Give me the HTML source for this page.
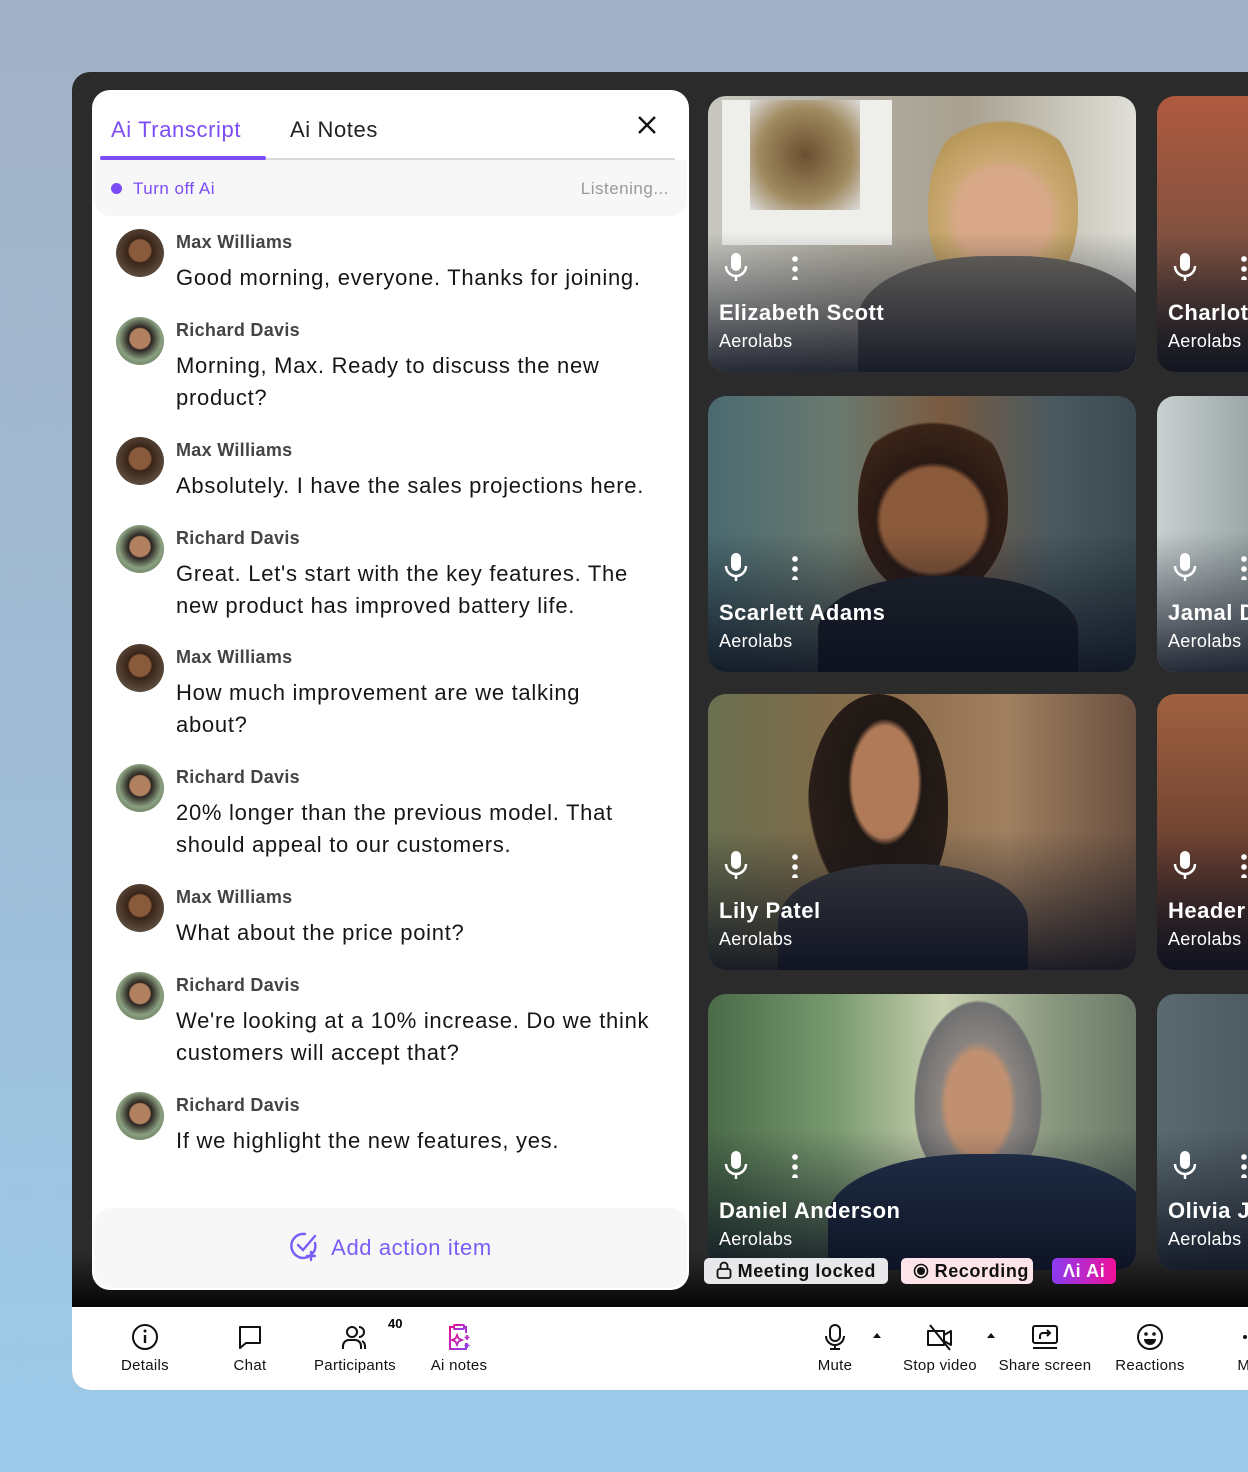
<!DOCTYPE html>
<html><head><meta charset="utf-8">
<style>
*{margin:0;padding:0;box-sizing:border-box}
body{width:1248px;height:1472px;overflow:hidden;font-family:"Liberation Sans",sans-serif;background:linear-gradient(180deg,#a2b1c5 0%,#a0bcd6 50%,#9ccbea 100%);position:relative}
.frame{position:absolute;left:72px;top:72px;width:1200px;height:1318px;background:#2b2b2b;border-radius:18px 0 0 18px;overflow:hidden}
.frame:after{content:"";position:absolute;left:0;right:0;top:1180px;height:56px;background:linear-gradient(#2b2b2b,#050505)}
.panel{position:absolute;left:92px;top:90px;width:597px;height:1200px;background:#fff;border-radius:18px;z-index:2;overflow:hidden}
.tab{position:absolute;top:27px;font-size:22px;letter-spacing:.6px}
.tabline{position:absolute;left:8px;right:14px;top:68px;height:2px;background:#d8d8dc}
.tabact{position:absolute;left:8px;width:166px;top:66px;height:4px;background:#7b4cf5;border-radius:2px}
.status{position:absolute;left:2px;right:2px;top:70px;height:56px;background:#f7f7f8;border-radius:0 0 16px 16px}
.ent{position:absolute;left:24px;width:560px}
.av{position:absolute;left:0;top:-13px;width:48px;height:48px;border-radius:50%}
.av.m{background:radial-gradient(circle at 50% 45%,#8a5a3c 0 30%,#3a2418 34%,#5a4a3c 70%,#2a2a30)}
.av.r{background:radial-gradient(circle at 50% 45%,#b08060 0 28%,#2a2220 32%,#8aa080 60%,#506048)}
.nm{position:absolute;left:60px;top:-10px;font-size:18px;font-weight:bold;color:#444;letter-spacing:.3px}
.tx{position:absolute;left:60px;top:20px;font-size:22px;line-height:32px;color:#161616;width:478px;letter-spacing:.72px}
.add{position:absolute;left:2px;right:2px;top:1118px;height:80px;background:#f7f7f8;border-radius:18px;text-align:center;color:#7b5cf5;font-size:22px;line-height:80px;letter-spacing:.6px}
.tile{position:absolute;width:428px;height:276px;border-radius:18px;overflow:hidden;z-index:1}
.tile .sh{position:absolute;left:0;right:0;bottom:0;height:140px;background:linear-gradient(transparent,rgba(10,15,30,.85))}
.tile .n{position:absolute;left:11px;bottom:46px;color:#fff;font-weight:bold;font-size:22px;white-space:nowrap;letter-spacing:.5px}
.tile .c{position:absolute;left:11px;bottom:20px;color:#fff;font-size:18px;letter-spacing:.3px}
.tile svg{position:absolute;left:16px;bottom:90px}
.tile .dots{position:absolute;left:84px;bottom:92px;width:6px;height:26px;background:radial-gradient(circle,#fff 2.6px,transparent 3px) 0 0/6px 10px repeat-y}
.face{position:absolute;border-radius:50% 50% 45% 45%}
.body{position:absolute;border-radius:45% 45% 0 0}
.tb{position:absolute;top:1307px;left:72px;width:1200px;height:83px;background:#fff;border-radius:0 0 0 18px;z-index:3}
.ti{position:absolute;top:16px;text-align:center;font-size:15px;color:#111;width:110px;letter-spacing:.3px}
.ti svg{display:block;margin:0 auto 6px}
.badge{position:absolute;top:1258px;height:26px;border-radius:5px;font-size:18px;font-weight:bold;line-height:26px;z-index:4;letter-spacing:.6px}
</style></head><body>
<div class="frame"></div>

<div class="tile" style="left:708px;top:96px;background:linear-gradient(90deg,#c8c8c0 0%,#b4b0a4 30%,#a8a090 60%,#e0e0d8 100%)">
 <div style="position:absolute;left:14px;top:4px;width:170px;height:145px;background:#eeeeea"></div>
 <div style="position:absolute;left:42px;top:4px;width:110px;height:110px;background:radial-gradient(circle,#6a5030,#a08a60 60%,#ddd)"></div>
 <div class="face" style="left:220px;top:10px;width:150px;height:200px;background:radial-gradient(circle at 50% 55%,#d8a888 0 35%,#c8a870 45%,#b89858 70%,transparent 72%)"></div>
 <div class="body" style="left:150px;top:160px;width:290px;height:140px;background:#6a6660"></div>
 <div class="sh"></div>
 <svg width="24" height="30" viewBox="0 0 24 30"><rect x="7" y="1" width="10" height="18" rx="5" fill="#fff"/><path d="M2 14a10 10 0 0 0 20 0M12 24v5" stroke="#fff" stroke-width="2.5" fill="none"/></svg><div class="dots"></div>
 <div class="n">Elizabeth Scott</div><div class="c">Aerolabs</div></div>
<div class="tile" style="left:1157px;top:96px;background:linear-gradient(180deg,#b05a40,#7a5040 60%,#403830)">
 <div class="sh"></div><svg width="24" height="30" viewBox="0 0 24 30"><rect x="7" y="1" width="10" height="18" rx="5" fill="#fff"/><path d="M2 14a10 10 0 0 0 20 0M12 24v5" stroke="#fff" stroke-width="2.5" fill="none"/></svg><div class="dots"></div>
 <div class="n">Charlotte</div><div class="c">Aerolabs</div></div>

<div class="tile" style="left:708px;top:396px;background:linear-gradient(90deg,#4a6a70 0%,#6a7a70 30%,#7a5a40 55%,#4a5a60 80%,#3a4a50 100%)">
 <div class="face" style="left:150px;top:10px;width:150px;height:190px;background:radial-gradient(circle at 50% 60%,#8a5a3a 0 38%,#2a1a14 42%,#3a2418 70%,transparent 72%)"></div>
 <div class="body" style="left:110px;top:180px;width:260px;height:120px;background:#20242c"></div>
 <div class="sh"></div><svg width="24" height="30" viewBox="0 0 24 30"><rect x="7" y="1" width="10" height="18" rx="5" fill="#fff"/><path d="M2 14a10 10 0 0 0 20 0M12 24v5" stroke="#fff" stroke-width="2.5" fill="none"/></svg><div class="dots"></div>
 <div class="n">Scarlett Adams</div><div class="c">Aerolabs</div></div>
<div class="tile" style="left:1157px;top:396px;background:linear-gradient(90deg,#c8d0d0,#607070 50%,#405050)">
 <div class="sh"></div><svg width="24" height="30" viewBox="0 0 24 30"><rect x="7" y="1" width="10" height="18" rx="5" fill="#fff"/><path d="M2 14a10 10 0 0 0 20 0M12 24v5" stroke="#fff" stroke-width="2.5" fill="none"/></svg><div class="dots"></div>
 <div class="n">Jamal D</div><div class="c">Aerolabs</div></div>

<div class="tile" style="left:708px;top:694px;background:linear-gradient(90deg,#6a7050 0%,#8a6a48 40%,#a08060 70%,#6a5040 100%)">
 <div class="face" style="left:100px;top:0px;width:140px;height:220px;background:radial-gradient(ellipse at 55% 40%,#b07a58 0 30%,#201814 34%,#2a1e18 70%,transparent 72%)"></div>
 <div class="body" style="left:70px;top:170px;width:250px;height:130px;background:#3a3a40"></div>
 <div class="sh"></div><svg width="24" height="30" viewBox="0 0 24 30"><rect x="7" y="1" width="10" height="18" rx="5" fill="#fff"/><path d="M2 14a10 10 0 0 0 20 0M12 24v5" stroke="#fff" stroke-width="2.5" fill="none"/></svg><div class="dots"></div>
 <div class="n">Lily Patel</div><div class="c">Aerolabs</div></div>
<div class="tile" style="left:1157px;top:694px;background:linear-gradient(180deg,#a06040,#6a4030 60%,#3a2a28)">
 <div class="sh"></div><svg width="24" height="30" viewBox="0 0 24 30"><rect x="7" y="1" width="10" height="18" rx="5" fill="#fff"/><path d="M2 14a10 10 0 0 0 20 0M12 24v5" stroke="#fff" stroke-width="2.5" fill="none"/></svg><div class="dots"></div>
 <div class="n">Header</div><div class="c">Aerolabs</div></div>

<div class="tile" style="left:708px;top:994px;background:linear-gradient(90deg,#4a6a48 0%,#7a9a70 30%,#c8d0b0 55%,#8a9880 80%,#6a7a68 100%)">
 <div class="face" style="left:205px;top:5px;width:130px;height:190px;background:radial-gradient(ellipse at 50% 55%,#c09070 0 35%,#8a8480 42%,#707070 68%,transparent 70%)"></div>
 <div class="body" style="left:120px;top:160px;width:320px;height:140px;background:#22304a"></div>
 <div class="sh"></div><svg width="24" height="30" viewBox="0 0 24 30"><rect x="7" y="1" width="10" height="18" rx="5" fill="#fff"/><path d="M2 14a10 10 0 0 0 20 0M12 24v5" stroke="#fff" stroke-width="2.5" fill="none"/></svg><div class="dots"></div>
 <div class="n">Daniel Anderson</div><div class="c">Aerolabs</div></div>
<div class="tile" style="left:1157px;top:994px;background:linear-gradient(90deg,#5a6a70,#3a4048 60%,#2a3038)">
 <div class="sh"></div><svg width="24" height="30" viewBox="0 0 24 30"><rect x="7" y="1" width="10" height="18" rx="5" fill="#fff"/><path d="M2 14a10 10 0 0 0 20 0M12 24v5" stroke="#fff" stroke-width="2.5" fill="none"/></svg><div class="dots"></div>
 <div class="n">Olivia J</div><div class="c">Aerolabs</div></div>

<div class="badge" style="left:704px;width:184px;background:#e8e8ea;color:#111;padding-left:12px">
 <svg width="16" height="18" viewBox="0 0 16 18" style="vertical-align:-2px"><rect x="1.5" y="8" width="13" height="9" rx="2" fill="none" stroke="#111" stroke-width="1.8"/><path d="M4.5 8V5a3.5 3.5 0 0 1 7 0v3" fill="none" stroke="#111" stroke-width="1.8"/></svg> Meeting locked</div>
<div class="badge" style="left:901px;width:132px;background:#fde4e8;color:#111;padding-left:12px">
 <svg width="16" height="16" viewBox="0 0 16 16" style="vertical-align:-2px"><circle cx="8" cy="8" r="6.5" fill="none" stroke="#111" stroke-width="1.6"/><circle cx="8" cy="8" r="4" fill="#111"/></svg> Recording</div>
<div class="badge" style="left:1052px;width:64px;background:linear-gradient(90deg,#8a3cf0,#f0109a);color:#fff;padding-left:11px">&#923;i Ai</div>

<div class="panel">
 <div class="status">
  <div style="position:absolute;left:17px;top:23px;width:11px;height:11px;border-radius:50%;background:#7b4cf5"></div>
  <div style="position:absolute;left:39px;top:19px;font-size:17px;color:#7b4cf5;letter-spacing:.5px">Turn off Ai</div>
  <div style="position:absolute;right:18px;top:19px;font-size:17px;color:#999;letter-spacing:.5px">Listening...</div>
 </div>
 <div class="tabline"></div><div class="tabact"></div>
 <div class="tab" style="left:19px;color:#7b4cf5">Ai Transcript</div>
 <div class="tab" style="left:198px;color:#222">Ai Notes</div>
 <svg style="position:absolute;left:545px;top:25px" width="20" height="20" viewBox="0 0 20 20"><path d="M2 2L18 18M18 2L2 18" stroke="#111" stroke-width="2.4"/></svg>
 <div class="ent" style="top:152px"><div class="av m"></div><div class="nm">Max Williams</div><div class="tx">Good morning, everyone. Thanks for joining.</div></div>
 <div class="ent" style="top:240px"><div class="av r"></div><div class="nm">Richard Davis</div><div class="tx">Morning, Max. Ready to discuss the new product?</div></div>
 <div class="ent" style="top:360px"><div class="av m"></div><div class="nm">Max Williams</div><div class="tx">Absolutely. I have the sales projections here.</div></div>
 <div class="ent" style="top:448px"><div class="av r"></div><div class="nm">Richard Davis</div><div class="tx">Great. Let's start with the key features. The new product has improved battery life.</div></div>
 <div class="ent" style="top:567px"><div class="av m"></div><div class="nm">Max Williams</div><div class="tx">How much improvement are we talking about?</div></div>
 <div class="ent" style="top:687px"><div class="av r"></div><div class="nm">Richard Davis</div><div class="tx">20% longer than the previous model. That should appeal to our customers.</div></div>
 <div class="ent" style="top:807px"><div class="av m"></div><div class="nm">Max Williams</div><div class="tx">What about the price point?</div></div>
 <div class="ent" style="top:895px"><div class="av r"></div><div class="nm">Richard Davis</div><div class="tx">We're looking at a 10% increase. Do we think customers will accept that?</div></div>
 <div class="ent" style="top:1015px"><div class="av r"></div><div class="nm">Richard Davis</div><div class="tx">If we highlight the new features, yes.</div></div>
 <div class="add"><svg width="32" height="32" viewBox="0 0 32 32" style="vertical-align:-7px;margin-right:10px"><path d="M26 13A12 12 0 1 1 16 4" fill="none" stroke="#7b5cf5" stroke-width="2.4" stroke-linecap="round"/><path d="M9 15l5 5 12-14M22 22v8M18 26h8" fill="none" stroke="#7b5cf5" stroke-width="2.4" stroke-linecap="round"/></svg>Add action item</div>
</div>

<div class="tb">
 <div class="ti" style="left:18px"><svg width="28" height="28" viewBox="0 0 28 28"><circle cx="14" cy="14" r="12" fill="none" stroke="#111" stroke-width="2"/><path d="M14 12v8" stroke="#111" stroke-width="2.4"/><circle cx="14" cy="8" r="1.5" fill="#111"/></svg>Details</div>
 <div class="ti" style="left:123px"><svg width="28" height="28" viewBox="0 0 28 28"><path d="M4 4h20v16H10l-6 5z" fill="none" stroke="#111" stroke-width="2" stroke-linejoin="round"/></svg>Chat</div>
 <div class="ti" style="left:228px"><svg width="28" height="28" viewBox="0 0 28 28"><circle cx="11" cy="9" r="5" fill="none" stroke="#111" stroke-width="2"/><path d="M2 26v-3a6 6 0 0 1 6-6h6a6 6 0 0 1 6 6v3M18 4a5 5 0 0 1 0 10M24 26v-3a6 6 0 0 0-3-5" fill="none" stroke="#111" stroke-width="2"/></svg>Participants</div>
 <div style="position:absolute;left:316px;top:9px;font-size:13px;font-weight:bold">40</div>
 <div class="ti" style="left:332px"><svg width="28" height="28" viewBox="0 0 28 28"><defs><linearGradient id="g" x1="0" y1="0" x2="1" y2="1"><stop offset="0" stop-color="#e01090"/><stop offset="1" stop-color="#9040f0"/></linearGradient></defs><path d="M9 4H5v22h16v-6M19 4h2v6" fill="none" stroke="url(#g)" stroke-width="2"/><rect x="9" y="2" width="10" height="4" rx="1" fill="none" stroke="url(#g)" stroke-width="2"/><path d="M12 12l1.5 3.5L17 17l-3.5 1.5L12 22l-1.5-3.5L7 17l3.5-1.5zM22 12v5M19.5 14.5h5M22 20v5M19.5 22.5h5" fill="none" stroke="url(#g)" stroke-width="1.8"/></svg>Ai notes</div>
 <div class="ti" style="left:708px"><svg width="28" height="28" viewBox="0 0 28 28"><rect x="9" y="2" width="10" height="16" rx="5" fill="none" stroke="#111" stroke-width="2"/><path d="M5 13a9 9 0 0 0 18 0M14 22v4M9 26h10" fill="none" stroke="#111" stroke-width="2"/></svg>Mute</div>
 <div style="position:absolute;left:801px;top:22px;width:0;height:0;border:4px solid transparent;border-bottom:5px solid #111"></div>
 <div class="ti" style="left:813px"><svg width="30" height="28" viewBox="0 0 30 28"><path d="M3 8h16v14H3zM19 12l7-4v14l-7-4M5 2l20 25" fill="none" stroke="#111" stroke-width="2" stroke-linejoin="round"/></svg>Stop video</div>
 <div style="position:absolute;left:915px;top:22px;width:0;height:0;border:4px solid transparent;border-bottom:5px solid #111"></div>
 <div class="ti" style="left:918px"><svg width="30" height="28" viewBox="0 0 30 28"><rect x="3" y="3" width="24" height="17" rx="2" fill="none" stroke="#111" stroke-width="2"/><path d="M3 25h24M10 16v-3a3 3 0 0 1 3-3h7M17 7l3 3-3 3" fill="none" stroke="#111" stroke-width="2"/></svg>Share screen</div>
 <div class="ti" style="left:1023px"><svg width="28" height="28" viewBox="0 0 28 28"><circle cx="14" cy="14" r="12" fill="none" stroke="#111" stroke-width="2"/><circle cx="10" cy="11" r="1.8" fill="#111"/><circle cx="18" cy="11" r="1.8" fill="#111"/><path d="M8 16h12a6 6 0 0 1-12 0z" fill="#111"/></svg>Reactions</div>
 <div class="ti" style="left:1128px"><svg width="28" height="28" viewBox="0 0 28 28"><circle cx="4" cy="14" r="2" fill="#111"/><circle cx="14" cy="14" r="2" fill="#111"/><circle cx="24" cy="14" r="2" fill="#111"/></svg>More</div>
</div>
</body></html>
